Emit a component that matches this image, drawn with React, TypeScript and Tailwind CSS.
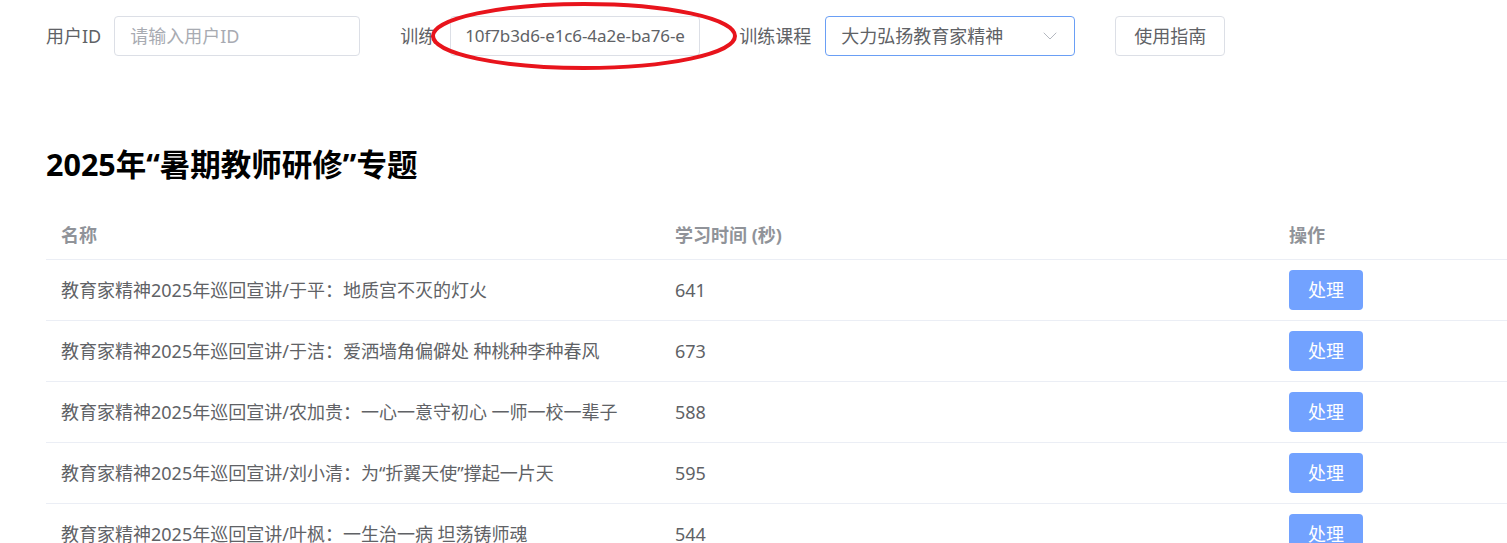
import React from 'react';
import { ChevronDown } from 'lucide-react';

interface CourseRow {
  name: string;
  seconds: number;
}

const rows: CourseRow[] = [
  { name: '教育家精神2025年巡回宣讲/于平：地质宫不灭的灯火', seconds: 641 },
  { name: '教育家精神2025年巡回宣讲/于洁：爱洒墙角偏僻处 种桃种李种春风', seconds: 673 },
  { name: '教育家精神2025年巡回宣讲/农加贵：一心一意守初心 一师一校一辈子', seconds: 588 },
  { name: '教育家精神2025年巡回宣讲/刘小清：为“折翼天使”撑起一片天', seconds: 595 },
  { name: '教育家精神2025年巡回宣讲/叶枫：一生治一病 坦荡铸师魂', seconds: 544 },
];

const App: React.FC = () => {
  return (
    <div
      className="relative w-[1507px] h-[543px] overflow-hidden bg-white text-[18px] text-[#606266]"
      style={{ fontFamily: '"Noto Sans", "Noto Sans CJK SC", sans-serif' }}
    >
      <div className="pl-[46px] pt-4">
        {/* Filter bar */}
        <div className="flex items-center h-10">
          <span className="mr-[13px] leading-none">用户ID</span>
          <div className="w-[246px] h-10 flex items-center px-[15px] border border-[#dcdfe6] rounded bg-white text-[#a8abb2]">
            请输入用户ID
          </div>

          <span className="ml-10 w-[36px] mr-[14px] leading-none whitespace-nowrap overflow-hidden">训练</span>
          <div className="w-[250px] h-10 flex items-center pl-[14px] pr-[10px] border border-[#dcdfe6] rounded bg-white">
            <span className="block w-full overflow-hidden whitespace-nowrap text-[17px] tracking-[-0.1px]">
              10f7b3d6-e1c6-4a2e-ba76-e
            </span>
          </div>

          <span className="ml-[39px] mr-[14px] leading-none">训练课程</span>
          <div className="w-[250px] h-10 flex items-center justify-between pl-[15px] pr-[12px] border border-[#6a9ff5] rounded bg-white">
            <span>大力弘扬教育家精神</span>
            <ChevronDown className="w-6 h-6 text-[#b4b8c0]" strokeWidth={1} />
          </div>

          <button className="ml-10 h-10 px-[18px] border border-[#dcdfe6] rounded bg-white text-[#606266]">
            使用指南
          </button>
        </div>

        {/* Section title */}
        <h1 className="mt-[88px] text-[30.5px] leading-10 font-bold text-black">
          2025年“暑期教师研修”专题
        </h1>

        {/* Table */}
        <div className="mt-[28px] w-[1842px]">
          <div className="grid grid-cols-[614px_614px_614px] h-12 items-center border-b border-[#ebeef5] font-bold text-[#909399]">
            <div className="px-[15px]">名称</div>
            <div className="px-[15px]">学习时间 (秒)</div>
            <div className="px-[15px]">操作</div>
          </div>
          {rows.map((row) => (
            <div
              key={row.name}
              className="grid grid-cols-[614px_614px_614px] items-center py-[10px] border-b border-[#ebeef5]"
            >
              <div className="px-[15px] whitespace-nowrap">{row.name}</div>
              <div className="px-[15px]">{row.seconds}</div>
              <div className="px-[15px]">
                <button className="w-[74px] h-10 rounded bg-[#72a2ff] text-white">处理</button>
              </div>
            </div>
          ))}
        </div>
      </div>

      {/* Red annotation ellipse */}
      <svg className="absolute left-0 top-0 pointer-events-none" width="1507" height="80">
        <ellipse cx="584" cy="36" rx="151" ry="32" fill="none" stroke="#e8141c" strokeWidth="4" />
      </svg>
    </div>
  );
};

export default App;
